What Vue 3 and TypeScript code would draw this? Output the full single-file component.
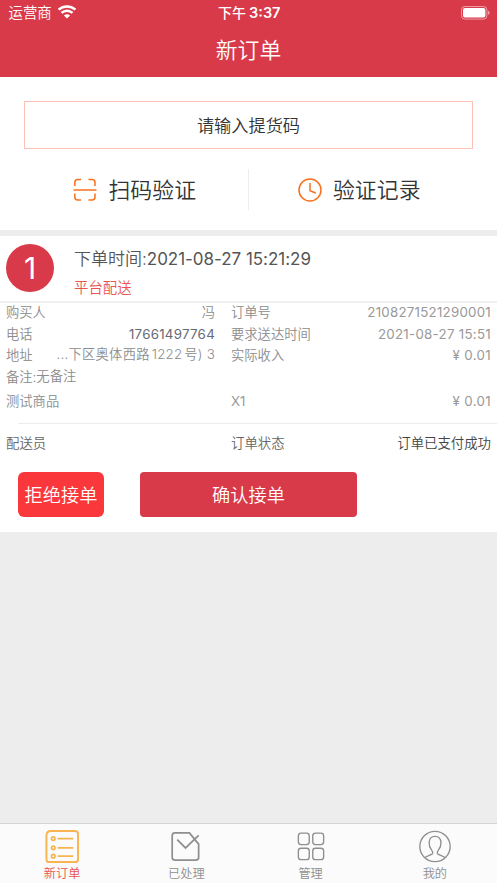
<script setup lang="ts">
interface Tab {
  id: string
  label: string
}

const tabs: Tab[] = [
  { id: 'new', label: '新订单' },
  { id: 'done', label: '已处理' },
  { id: 'manage', label: '管理' },
  { id: 'mine', label: '我的' },
]
const activeTab = 'new'
</script>

<template>
  <div class="screen">
    <header class="header">
      <div class="status">
        <div class="carrier">
          <span>运营商</span>
          <svg class="wifi" viewBox="0 0 18 14">
            <path d="M0.6 4.7a12.3 12.3 0 0 1 16.8 0" />
            <path d="M3.5 7.9a8 8 0 0 1 11 0" />
            <path class="dot" d="M5.9 10.5a4.7 4.7 0 0 1 6.2 0L9 13.6z" />
          </svg>
        </div>
        <div class="clock">下午<span class="time">3:37</span></div>
        <div class="power">
          <svg class="battery" viewBox="0 0 29 14">
            <rect class="shell" x="0.5" y="0.5" width="25.4" height="12.6" rx="3.4" />
            <rect class="fill" x="2" y="2" width="22.4" height="9.6" rx="2" />
            <path class="cap" d="M27 4.7c2.2.7 2.2 3.6 0 4.3z" />
          </svg>
        </div>
      </div>
      <h1 class="title">新订单</h1>
    </header>

    <section class="verify">
      <div class="code-input">请输入提货码</div>
      <div class="actions">
        <div class="action">
          <svg class="action-icon" viewBox="0 0 24 24">
            <path d="M1.8 8V4.5a3 3 0 0 1 3-3H8M15.5 1.5H19a3 3 0 0 1 3 3V8M22 15.5V19a3 3 0 0 1-3 3h-3.5M8 22H4.800a3 3 0 0 1-3-3v-3.500M.5 12h23" />
          </svg>
          <span class="action-label">扫码验证</span>
        </div>
        <div class="action">
          <svg class="action-icon" viewBox="0 0 24 24">
            <circle cx="12" cy="12" r="11" />
            <path d="M12 5v7.800l5.700 2.200" />
          </svg>
          <span class="action-label">验证记录</span>
        </div>
      </div>
    </section>

    <section class="order">
      <div class="order-head">
        <div class="badge">1</div>
        <div class="order-info">
          <div class="order-time">下单时间:<span class="order-date">2021-08-27 15:21:29</span></div>
          <div class="delivery">平台配送</div>
        </div>
      </div>
      <div class="details">
        <div class="row">
          <div class="cell left"><span>购买人</span><span>冯</span></div>
          <div class="cell"><span>订单号</span><span class="num id">2108271521290001</span></div>
        </div>
        <div class="row">
          <div class="cell left"><span>电话</span><span class="num phone">17661497764</span></div>
          <div class="cell"><span>要求送达时间</span><span class="num date">2021-08-27 15:51</span></div>
        </div>
        <div class="row">
          <div class="cell left"><span>地址</span><span class="address">...下区奥体西路<span class="street">1222</span>号) 3</span></div>
          <div class="cell"><span>实际收入</span><span class="num price">¥ 0.01</span></div>
        </div>
        <div class="row"><div class="cell"><span>备注:<span class="note">无备注</span></span></div></div>
        <div class="row goods">
          <div class="cell left"><span>测试商品</span></div>
          <div class="cell"><span class="num">X1</span><span class="num price">¥ 0.01</span></div>
        </div>
      </div>
      <div class="row state">
        <div class="cell left"><span>配送员</span></div>
        <div class="cell"><span>订单状态</span><span class="paid">订单已支付成功</span></div>
      </div>
      <div class="buttons">
        <button class="btn reject">拒绝接单</button>
        <button class="btn accept">确认接单</button>
      </div>
    </section>

    <nav class="tabbar">
      <div v-for="tab in tabs" :key="tab.id" class="tab" :class="{ active: tab.id === activeTab }">
        <svg v-if="tab.id === 'new'" class="tab-icon" viewBox="0 0 36 36">
          <path class="thick" d="M6.500 2h24.500Q34.500 2 34.500 5v26q0 3-3 3H5q-3 0-3-3V7q0-5 4.500-5z" />
          <circle cx="9" cy="9.800" r="1.800" /><circle cx="9" cy="19.300" r="1.800" /><circle cx="9" cy="28" r="1.800" />
          <path d="M13.500 9.800h16M13.500 19.300h16M13.500 28h16" />
        </svg>
        <svg v-else-if="tab.id === 'done'" class="tab-icon" viewBox="0 0 36 36">
          <path d="M22 4H6.500Q3.800 4 3.800 7v22q0 3 3 3H28q3 0 3-3V15.500L21.500 4" />
          <path d="M9 11l8.500 8.500L31 6.500" />
        </svg>
        <svg v-else-if="tab.id === 'manage'" class="tab-icon thin" viewBox="0 0 36 36">
          <rect x="5" y="4.300" width="11.200" height="11.700" rx="2.800" />
          <rect x="19.800" y="4.300" width="11.200" height="11.700" rx="2.800" />
          <rect x="5" y="19.800" width="11.200" height="11.700" rx="2.800" />
          <rect x="19.800" y="19.800" width="11.200" height="11.700" rx="2.800" />
        </svg>
        <svg v-else class="tab-icon thin" viewBox="0 0 36 36">
          <circle cx="18" cy="18" r="15.600" />
          <path d="M7.500 29.500c1.500-2 7-2.800 8-4.200.5-1 .2-2-1-3.500-2-2.500-2.700-5-2.500-8 .2-4 2.500-6.200 6-6.200s5.900 2.200 6.100 6.200c.2 3-.6 5.500-2.600 8-1.200 1.500-1.500 2.500-1 3.500 1 1.400 6.500 2.200 8 4.200" />
        </svg>
        <span class="tab-label">{{ tab.label }}</span>
      </div>
    </nav>
  </div>
</template>

<style>
body {
  margin: 0;
}
</style>

<style scoped>
.screen {
  box-sizing: border-box;
  width: 497px;
  height: 883px;
  display: flex;
  flex-direction: column;
  overflow: hidden;
  background: #ededed;
  color: #333;
  font-family: Inter, "Noto Sans CJK SC", sans-serif;
  font-weight: 350;
  white-space: nowrap;
}
.screen svg {
  display: block;
  fill: none;
  stroke: currentColor;
}
.header {
  height: 77px;
  flex: none;
  background: #d93a49;
  color: #fff;
}
.status {
  height: 26px;
  display: grid;
  grid-template-columns: 1fr auto 1fr;
  align-items: center;
  padding: 0 7px 0 8.500px;
  font-size: 14.400px;
  line-height: 26px;
}
.carrier {
  display: flex;
  align-items: center;
  gap: 6px;
}
.wifi {
  width: 18px;
  height: 14px;
  margin-top: -2px;
  stroke-width: 2.500;
}
.wifi .dot {
  fill: #fff;
  stroke: none;
}
.clock {
  font-size: 14px;
  font-weight: 500;
}
.time {
  margin-left: 3px;
  font-size: 14.500px;
  font-weight: 600;
}
.power {
  display: flex;
  justify-content: flex-end;
}
.battery {
  width: 29px;
  height: 14px;
  margin-top: -1px;
}
.battery .shell {
  stroke: #fff;
  opacity: 0.5;
}
.battery .fill {
  fill: #fff;
  stroke: none;
}
.battery .cap {
  fill: #fff;
  stroke: none;
  opacity: 0.5;
}
.title {
  margin: 0;
  font-size: 21.800px;
  line-height: 49px;
  font-weight: 350;
  text-align: center;
}
.verify {
  height: 129px;
  flex: none;
  padding: 24px 24px 0;
  background: #fff;
}
.code-input {
  box-sizing: border-box;
  height: 48px;
  border: 1px solid #ffc1b4;
  text-align: center;
  font-size: 17.200px;
  line-height: 48px;
}
.actions {
  display: flex;
  margin-top: 20px;
  height: 41px;
}
.action {
  flex: 1;
  display: flex;
  align-items: center;
  justify-content: center;
  gap: 11px;
  padding-right: 2px;
  font-size: 21.900px;
}
.action-label {
  margin-top: -2px;
}
.action + .action {
  border-left: 1px solid #ededed;
  padding-right: 3px;
}
.action-icon {
  width: 24px;
  height: 24px;
  color: #f9711c;
  stroke-width: 1.500;
}
.order {
  margin-top: 6px;
  height: 296px;
  flex: none;
  background: #fff;
}
.order-head {
  display: flex;
  gap: 20px;
  height: 65px;
  padding-left: 6px;
}
.badge {
  width: 48px;
  height: 48px;
  margin-top: 8px;
  border-radius: 50%;
  background: #d93a49;
  color: #fff;
  font-size: 30px;
  font-weight: 400;
  line-height: 49px;
  text-align: center;
}
.order-time {
  margin-top: 10px;
  color: #555;
  font-size: 17px;
  line-height: 26px;
}
.order-date {
  font-weight: 400;
  letter-spacing: -0.030px;
}
.delivery {
  margin-top: 5px;
  color: #e85550;
  font-size: 14.400px;
  line-height: 22px;
}
.details {
  border-top: 2px solid #f0f0f0;
  height: 120px;
  color: #8c8c8c;
  font-size: 13.300px;
}
.row {
  display: flex;
  height: 21.500px;
  line-height: 19px;
  padding: 0 6px;
}
.cell {
  flex: 1;
  display: flex;
  justify-content: space-between;
}
.cell.left {
  flex: none;
  width: 209px;
  margin-right: 16px;
}
.num {
  font-weight: 400;
  color: #999;
}
.id {
  letter-spacing: 0.250px;
}
.num.phone {
  color: #666a73;
  letter-spacing: 0.270px;
}
.date {
  letter-spacing: 0.280px;
}
.price {
  letter-spacing: 0.350px;
}
.address,
.note {
  position: relative;
  top: -1px;
}
.address {
  letter-spacing: 0.230px;
}
.street {
  margin: 0 2px;
}
.goods {
  margin-top: 3px;
}
.state {
  margin-left: 18px;
  padding-left: 0;
  height: 38px;
  line-height: 38px;
  border-top: 1px solid #ededed;
  color: #666;
  font-size: 13.400px;
}
.state .left {
  margin-left: -12px;
  width: 209px;
}
.state .paid {
  color: #444;
}
.buttons {
  display: flex;
  gap: 36px;
  padding: 10px 0 0 18px;
}
.btn {
  box-sizing: border-box;
  height: 45px;
  padding: 1px 0 0;
  border: 0;
  color: #fff;
  font: inherit;
  font-size: 18.200px;
  line-height: 44px;
}
.reject {
  width: 86px;
  border-radius: 6px;
  background: #fa383b;
}
.accept {
  width: 217px;
  border-radius: 4px;
  background: #d93a49;
}
.tabbar {
  box-sizing: border-box;
  margin-top: auto;
  height: 60px;
  display: flex;
  border-top: 1px solid #d5d5d5;
  background: #fbfbfb;
}
.tab {
  flex: 1;
  display: flex;
  flex-direction: column;
  align-items: center;
  padding-top: 5px;
  color: #8f8f8f;
}
.tab-icon {
  width: 36px;
  height: 36px;
  stroke-width: 1.800;
}
.tab-icon.thin {
  stroke-width: 1.400;
}
.tab-icon .thick {
  stroke-width: 2;
}
.active .tab-icon {
  color: #f8b453;
}
.tab-label {
  font-size: 12.200px;
  line-height: 19px;
}
.active .tab-label {
  color: #e85550;
}
</style>
